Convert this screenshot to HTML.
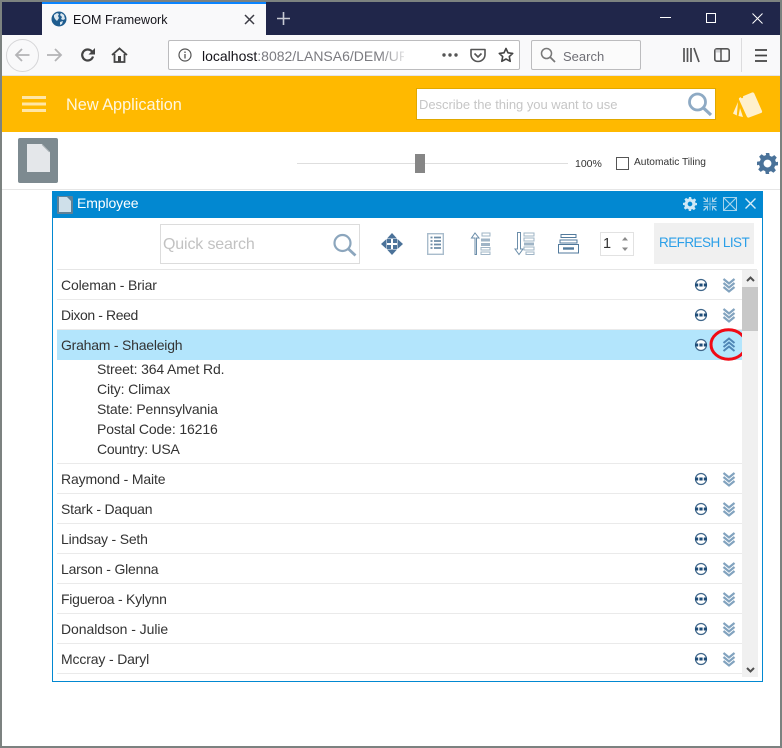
<!DOCTYPE html>
<html><head><meta charset="utf-8">
<style>
html,body{margin:0;padding:0;width:782px;height:748px;overflow:hidden;background:#fff}
body{position:relative;font-family:"Liberation Sans",sans-serif;color:#333}
.a{position:absolute}
.t{position:absolute;white-space:nowrap;line-height:20px}
.sep{position:absolute;left:57px;width:685px;height:1px;background:#eaeaea}
.n{position:absolute;left:61px;font-size:14px;line-height:20px;color:#333;white-space:nowrap;letter-spacing:-.15px}
.d{position:absolute;left:97px;font-size:14px;line-height:20px;color:#333;white-space:nowrap;letter-spacing:-.13px}
svg{position:absolute;overflow:visible}
</style></head><body>
<!-- window frame -->
<div class="a" style="left:0;top:0;width:782px;height:748px;box-sizing:border-box;border:2px solid #7c8280"></div>
<div class="a" style="left:2px;top:2px;width:778px;height:33px;background:#20264a"></div>
<div class="a" style="left:42px;top:2px;width:224px;height:33px;background:#f9f9fa"></div>
<div class="a" style="left:42px;top:2px;width:224px;height:2px;background:#0a84ff"></div>
<svg style="left:51px;top:11px" width="16" height="16" viewBox="0 0 16 16"><circle cx="8" cy="8" r="7.5" fill="#1f5d8f"/><path d="M3 4l3-2 2 1-1 2 1 2-2 3-2-2-1-2zM10 2l3 2 1 4-2 1-2-1 1-2-2-2zM9 11l3-1-1 3-2 1z" fill="#dbe7f0"/></svg>
<div class="t" style="left:73px;top:10px;font-size:12.5px;color:#15141a">EOM Framework</div>
<svg style="left:244px;top:14px" width="11" height="11" viewBox="0 0 11 11"><path d="M1 1l9 9M10 1l-9 9" stroke="#3c3c44" stroke-width="1.5"/></svg>
<svg style="left:276px;top:11px" width="15" height="15" viewBox="0 0 15 15"><path d="M7.5 1v13M1 7.5h13" stroke="#c8cad4" stroke-width="1.6"/></svg>
<svg style="left:660px;top:17px" width="11" height="2"><path d="M0 .5h11" stroke="#fff"/></svg>
<div class="a" style="left:706px;top:13px;width:8px;height:8px;border:1px solid #fff"></div>
<svg style="left:752px;top:13px" width="11" height="11" viewBox="0 0 11 11"><path d="M.5.5l10 10M10.5.5l-10 10" stroke="#fff"/></svg>

<!-- nav toolbar -->
<div class="a" style="left:2px;top:35px;width:778px;height:40px;background:#f9f9fa"></div>
<div class="a" style="left:2px;top:75px;width:778px;height:1px;background:#e4e4e6"></div>
<div class="a" style="left:6px;top:39px;width:31px;height:31px;border:1px solid #d6d6d8;border-radius:50%;background:#f9f9fa"></div>
<svg style="left:14px;top:47px" width="17" height="16" viewBox="0 0 17 16"><path d="M15.5 8H2M8 2L2 8l6 6" fill="none" stroke="#b4b4b6" stroke-width="1.8"/></svg>
<svg style="left:46px;top:47px" width="17" height="16" viewBox="0 0 17 16"><path d="M1 8h14M9 2l6 6-6 6" fill="none" stroke="#b4b4b6" stroke-width="1.8"/></svg>
<svg style="left:80px;top:47px" width="16" height="16" viewBox="0 0 16 16"><path d="M13 9.5A5.5 5.5 0 1 1 11.5 4L14 6" fill="none" stroke="#444" stroke-width="2.200"/><path d="M15 1v6.500h-6.500z" fill="#444"/></svg>
<svg style="left:111px;top:47px" width="17" height="16" viewBox="0 0 17 16"><path d="M1 8l7.500-6.500L16 8M3.500 7v8h10V7" fill="none" stroke="#444" stroke-width="1.800"/><rect x="7" y="9" width="3" height="6" fill="#444"/></svg>
<div class="a" style="left:168px;top:40px;width:352px;height:30px;box-sizing:border-box;border:1px solid #bcbcbe;border-radius:2px;background:#fff"></div>
<svg style="left:178px;top:48px" width="14" height="14" viewBox="0 0 14 14"><circle cx="7" cy="7" r="6" fill="none" stroke="#555" stroke-width="1.200"/><path d="M7 6v4.500M7 3.500v1.500" stroke="#555" stroke-width="1.300"/></svg>
<div class="t" style="left:202px;top:46px;font-size:14px;color:#15141a;width:202px;overflow:hidden">localhost<span style="color:#7b7b80">:8082/LANSA6/DEM/UF_</span></div>
<div class="a" style="left:380px;top:41px;width:30px;height:28px;background:linear-gradient(90deg,rgba(255,255,255,0),#fff)"></div>
<svg style="left:442px;top:53px" width="16" height="4"><circle cx="2" cy="2" r="1.700" fill="#555"/><circle cx="8" cy="2" r="1.700" fill="#555"/><circle cx="14" cy="2" r="1.700" fill="#555"/></svg>
<svg style="left:470px;top:48px" width="16" height="15" viewBox="0 0 16 15"><path d="M1 1.500h14v5a7 7 0 0 1-14 0z" fill="none" stroke="#555" stroke-width="1.600" stroke-linejoin="round"/><path d="M4.500 5.500L8 9l3.500-3.500" fill="none" stroke="#555" stroke-width="1.600"/></svg>
<svg style="left:498px;top:47px" width="16" height="16" viewBox="0 0 16 16"><path d="M8 1.500l2 4.300 4.700.6-3.400 3.200.9 4.700L8 12l-4.200 2.300.9-4.700L1.300 6.400 6 5.800z" fill="none" stroke="#444" stroke-width="1.600" stroke-linejoin="round"/></svg>
<div class="a" style="left:531px;top:40px;width:110px;height:30px;box-sizing:border-box;border:1px solid #bcbcbe;border-radius:2px;background:#fbfbfb"></div>
<svg style="left:540px;top:47px" width="16" height="16" viewBox="0 0 16 16"><circle cx="6.500" cy="6.500" r="5" fill="none" stroke="#777" stroke-width="1.500"/><path d="M10 10l5 5" stroke="#777" stroke-width="1.800"/></svg>
<div class="t" style="left:563px;top:47px;font-size:13px;color:#6f6f76">Search</div>
<svg style="left:683px;top:48px" width="17" height="15" viewBox="0 0 17 15"><path d="M1 0v14M4.500 0v14M8 0v14M11 0l5 14" fill="none" stroke="#555" stroke-width="1.700"/></svg>
<svg style="left:714px;top:48px" width="16" height="14" viewBox="0 0 16 14"><rect x=".8" y=".8" width="14.400" height="12.400" rx="2" fill="none" stroke="#555" stroke-width="1.600"/><rect x="1.500" y="1.500" width="5" height="3" fill="#d0d0d2"/><path d="M7 1v12" stroke="#555" stroke-width="1.500"/></svg>
<div class="a" style="left:741px;top:38px;width:1px;height:34px;background:#dcdcde"></div>
<svg style="left:755px;top:49px" width="12" height="13" viewBox="0 0 12 13"><path d="M0 1h12M0 6.500h12M0 12h12" stroke="#444" stroke-width="1.700"/></svg>

<!-- yellow app bar -->
<div class="a" style="left:2px;top:76px;width:778px;height:56px;background:#ffb900"></div>
<svg style="left:22px;top:96px" width="24" height="16" viewBox="0 0 24 16"><path d="M0 1.500h24M0 8h24M0 14.500h24" stroke="#ffe6a6" stroke-width="3"/></svg>
<div class="t" style="left:66px;top:94.500px;font-size:16.300px;color:#fff7e0">New Application</div>
<div class="a" style="left:416px;top:88px;width:300px;height:32px;box-sizing:border-box;border:1px solid #e0a800;background:#fff"></div>
<div class="t" style="left:419px;top:94.500px;font-size:13px;color:#c6c6c6;letter-spacing:-.03px">Describe the thing you want to use</div>
<svg style="left:687px;top:92px" width="26" height="25" viewBox="0 0 26 25"><circle cx="10.500" cy="10" r="8" fill="none" stroke="#8eaac4" stroke-width="2.800"/><path d="M16.500 16l7.500 7" stroke="#8eaac4" stroke-width="3.200"/></svg>
<svg style="left:0;top:0" width="782" height="130"><path d="M740 97.500L752 92.500Q753.500 92 754.300 93.500L762 111Q762.500 112.500 761 113L749 117.500Q747.500 118 746.800 116.500L739 99.500Q738.500 98 740 97.500z" fill="#fff0cc"/><path d="M738 102L733 113.500 736.800 115.500zM740 108L738.500 116 743 117z" fill="#fff0cc"/><circle cx="742" cy="97" r="1.200" fill="#ffb900"/></svg>

<!-- secondary toolbar -->
<div class="a" style="left:18px;top:138px;width:40px;height:45px;background:#7d8a90;border-radius:2px"></div>
<svg style="left:27px;top:144px" width="23" height="28" viewBox="0 0 23 28"><path d="M0 0h15l8 8v20H0z" fill="#e4e7ea"/><path d="M15 .5l7.500 7.500" stroke="#aab2b6"/></svg>
<div class="a" style="left:297px;top:163px;width:271px;height:1px;background:#dedede"></div>
<div class="a" style="left:415px;top:154px;width:10px;height:19px;background:#868686"></div>
<div class="t" style="left:575px;top:154px;font-size:10.500px;color:#333">100%</div>
<div class="a" style="left:616px;top:157px;width:11px;height:11px;border:1px solid #555;background:#fff"></div>
<div class="t" style="left:634px;top:153px;font-size:10.200px;color:#333">Automatic Tiling</div>
<svg style="left:757px;top:153px" width="21" height="21" viewBox="0 0 24 24"><path fill="#4a7299" fill-rule="evenodd" d="M10 0h4l.6 3.300 2.400 1 2.800-1.900 2.800 2.800-1.900 2.800 1 2.400L24 10v4l-3.300.6-1 2.400 1.900 2.800-2.800 2.800-2.800-1.900-2.400 1L14 24h-4l-.6-3.300-2.400-1-2.800 1.900-2.800-2.800 1.900-2.800-1-2.400L0 14v-4l3.300-.6 1-2.400-1.900-2.800 2.800-2.800 2.800 1.900 2.400-1zM12 7.500a4.500 4.500 0 1 0 0 9 4.500 4.500 0 0 0 0-9z"/></svg>
<div class="a" style="left:2px;top:189px;width:778px;height:1px;background:#e6e6e6"></div>

<!-- panel -->
<div class="a" style="left:52px;top:191px;width:711px;height:491px;box-sizing:border-box;border:1px solid #0288d1;background:#fff"></div>
<div class="a" style="left:52px;top:191px;width:711px;height:27px;background:#0288d1"></div>
<div class="a" style="left:57px;top:196px;width:16px;height:18px;background:#5f8197;border-radius:1px"></div>
<svg style="left:59px;top:197px" width="12" height="15" viewBox="0 0 12 15"><path d="M0 0h8l4 4v11H0z" fill="#cfe0ea"/></svg>
<div class="t" style="left:77px;top:193px;font-size:14px;color:#fff;letter-spacing:-.1px">Employee</div>
<svg style="left:683px;top:197px" width="14" height="14" viewBox="0 0 24 24"><path fill="#cfe8f6" fill-rule="evenodd" d="M10 0h4l.6 3.300 2.400 1 2.800-1.900 2.800 2.800-1.900 2.800 1 2.400L24 10v4l-3.300.6-1 2.400 1.900 2.800-2.800 2.800-2.800-1.900-2.400 1L14 24h-4l-.6-3.300-2.400-1-2.800 1.900-2.800-2.800 1.900-2.800-1-2.400L0 14v-4l3.300-.6 1-2.400-1.900-2.800 2.800-2.800 2.800 1.900 2.400-1zM12 8a4 4 0 1 0 0 8 4 4 0 0 0 0-8z"/></svg>
<svg style="left:703px;top:197px" width="14" height="14" viewBox="0 0 14 14" fill="none" stroke="#a5d3ec"><path d="M.5 .5l4.500 4.500M13.500 .5L9 5M.5 13.500L5 9M13.500 13.500L9 9" stroke-width="1.300"/><path d="M.5 4.500h4v-4M9.500.5v4h4M.5 9.500h4v4M9.500 13.500v-4h4"/><path d="M.5 7h13M7 .5v13" stroke-width=".7"/></svg>
<svg style="left:723px;top:197px" width="14" height="14" viewBox="0 0 14 14" fill="none" stroke="#a5d3ec"><path d="M.5 .5l13 13M13.500 .5l-13 13" stroke-width="1.200"/><path d="M.5 4.500v-4h4M9.500.5h4v4M.5 9.500v4h4M13.500 9.500v4h-4M.5 .5h13v13h-13z" /></svg>
<svg style="left:745px;top:198px" width="11" height="11" viewBox="0 0 11 11"><path d="M.5.500l10 10M10.500.500l-10 10" stroke="#d4ecf8" stroke-width="1.400"/></svg>

<!-- panel toolbar -->
<div class="a" style="left:160px;top:224px;width:200px;height:40px;box-sizing:border-box;border:1px solid #dcdcdc;background:#fff"></div>
<div class="t" style="left:163px;top:234.500px;font-size:16px;color:#c2c2c2;letter-spacing:-.15px">Quick search</div>
<svg style="left:332px;top:233px" width="25" height="24" viewBox="0 0 25 24"><circle cx="10.500" cy="10" r="8" fill="none" stroke="#8ca6bd" stroke-width="2.200"/><path d="M16.500 16l7 6.500" stroke="#8ca6bd" stroke-width="2.800"/></svg>
<svg style="left:381px;top:233px" width="22" height="22" viewBox="0 0 22 22" fill="#4b7299"><path d="M11 0l5 5.500H6zM11 22l-5-5.500h10zM0 11l5.500-5v10zM22 11l-5.500 5V6z"/><path d="M6 6h4v4H6zM12 6h4v4h-4zM6 12h4v4H6zM12 12h4v4h-4z"/></svg>
<svg style="left:427px;top:233px" width="17" height="22" viewBox="0 0 17 22"><rect x=".7" y=".7" width="15.600" height="20.600" fill="#fff" stroke="#a9bccc" stroke-width="1.400"/><path d="M3.500 4.500h2M7 4.500h7M3.500 8h2M7 8h7M3.500 11.500h2M7 11.500h7M3.500 15h2M7 15h7" stroke="#6d8ca6" stroke-width="1.800"/></svg>
<svg style="left:470px;top:232px" width="21" height="23" viewBox="0 0 21 23" fill="none"><path d="M5 22.500V6H1.500L5 1l4 5H6.500v16.500z" stroke="#6c8eaa"/><rect x="12" y="1" width="8" height="3" stroke="#9fb4c6"/><rect x="11" y="6.500" width="9" height="3" fill="#9fb4c6"/><rect x="11" y="11" width="9" height="3" fill="#9fb4c6"/><rect x="11" y="15.500" width="9" height="2.500" stroke="#9fb4c6"/><rect x="11" y="20" width="9" height="2.500" stroke="#9fb4c6"/></svg>
<svg style="left:514px;top:232px" width="21" height="23" viewBox="0 0 21 23" fill="none"><path d="M3.500 .5V17H1l4 5.500L9 17H6.500V.5z" stroke="#6c8eaa"/><rect x="10" y="1" width="10" height="3" stroke="#9fb4c6"/><rect x="10" y="6" width="10" height="3" stroke="#9fb4c6"/><rect x="10" y="10.500" width="10" height="3" fill="#9fb4c6"/><rect x="10" y="15" width="10" height="3" stroke="#9fb4c6"/><rect x="12" y="20" width="8" height="2.500" stroke="#9fb4c6"/></svg>
<svg style="left:558px;top:234px" width="21" height="20" viewBox="0 0 21 20" fill="none" stroke="#527a9c"><rect x="3" y=".5" width="15" height="3"/><rect x="2" y="6" width="17" height="3"/><rect x=".5" y="10.500" width="20" height="8.500"/><path d="M5 14.500h11" stroke-width="2.400"/></svg>
<div class="a" style="left:600px;top:232px;width:34px;height:24px;box-sizing:border-box;border:1px solid #e2e2e2;background:#fff"></div>
<div class="t" style="left:603px;top:234px;font-size:14.500px;color:#333">1</div>
<svg style="left:621px;top:237px" width="8" height="14" viewBox="0 0 8 14"><path d="M4 0l3 3.500H1zM4 14l3-3.500H1z" fill="#8a8a8a"/></svg>
<div class="a" style="left:654px;top:223px;width:100px;height:41px;background:#f0f0f0"></div>
<div class="t" style="left:659px;top:233px;font-size:13.500px;color:#2b9fe8;letter-spacing:-.55px">REFRESH LIST</div>
<div class="a" style="left:57px;top:269px;width:700px;height:1px;background:#e6e6e6"></div>

<!-- list -->
<div class="a" style="left:57px;top:330px;width:685px;height:30px;background:#b3e5fc"></div>
<div class="n" style="top:275px">Coleman - Briar</div>
<div class="sep" style="top:299px"></div>
<div class="n" style="top:305px;letter-spacing:-.4px">Dixon - Reed</div>
<div class="sep" style="top:329px"></div>
<div class="n" style="top:335px;letter-spacing:-.22px">Graham - Shaeleigh</div>
<div class="d" style="top:359px">Street: 364 Amet Rd.</div>
<div class="d" style="top:379px">City: Climax</div>
<div class="d" style="top:399px;letter-spacing:-.16px">State: Pennsylvania</div>
<div class="d" style="top:419px">Postal Code: 16216</div>
<div class="d" style="top:439px;letter-spacing:-.25px">Country: USA</div>
<div class="sep" style="top:463px"></div>
<div class="n" style="top:469px">Raymond - Maite</div>
<div class="sep" style="top:493px"></div>
<div class="n" style="top:499px;letter-spacing:-.2px">Stark - Daquan</div>
<div class="sep" style="top:523px"></div>
<div class="n" style="top:529px;letter-spacing:-.2px">Lindsay - Seth</div>
<div class="sep" style="top:553px"></div>
<div class="n" style="top:559px;letter-spacing:-.2px">Larson - Glenna</div>
<div class="sep" style="top:583px"></div>
<div class="n" style="top:589px;letter-spacing:-.24px">Figueroa - Kylynn</div>
<div class="sep" style="top:613px"></div>
<div class="n" style="top:619px;letter-spacing:-.06px">Donaldson - Julie</div>
<div class="sep" style="top:643px"></div>
<div class="n" style="top:649px">Mccray - Daryl</div>
<div class="sep" style="top:673px"></div>

<svg class="a" style="left:0;top:0" width="782" height="748">
<defs>
<g id="m"><circle cx="0" cy="0" r="5.500" fill="#fff" stroke="#3f668a" stroke-width="1.200"/><path d="M-6 -1.500h3.200v3h-3.200zM-1.600 -1.500h3.200v3h-3.200zM2.800 -1.500h3.200v3h-3.200z" fill="#1f4d78"/></g>
<g id="dn" fill="none" stroke="#82a3bf" stroke-width="2.200"><path d="M-5.500 -6L0 -1.500 5.500 -6"/><path d="M-5.500 -2L0 2.500 5.500 -2"/><path d="M-5.500 2L0 6.500 5.500 2"/></g>
<g id="up" fill="none" stroke="#4f86b5" stroke-width="2"><path d="M-5.500 6L0 1.500 5.500 6"/><path d="M-5.500 2L0 -2.500 5.500 2"/><path d="M-5.500 -2L0 -6.500 5.500 -2"/></g>
</defs>
<use href="#m" x="701" y="285"/><use href="#dn" x="729" y="285"/>
<use href="#m" x="701" y="315"/><use href="#dn" x="729" y="315"/>
<use href="#m" x="701" y="345"/><use href="#up" x="729" y="345"/>
<use href="#m" x="701" y="479"/><use href="#dn" x="729" y="479"/>
<use href="#m" x="701" y="509"/><use href="#dn" x="729" y="509"/>
<use href="#m" x="701" y="539"/><use href="#dn" x="729" y="539"/>
<use href="#m" x="701" y="569"/><use href="#dn" x="729" y="569"/>
<use href="#m" x="701" y="599"/><use href="#dn" x="729" y="599"/>
<use href="#m" x="701" y="629"/><use href="#dn" x="729" y="629"/>
<use href="#m" x="701" y="659"/><use href="#dn" x="729" y="659"/>
<ellipse cx="728.500" cy="344.500" rx="17.500" ry="14.700" fill="none" stroke="#f00a16" stroke-width="3"/>
</svg>

<!-- scrollbar -->
<div class="a" style="left:742px;top:270px;width:16px;height:407px;background:#f0f0f0"></div>
<div class="a" style="left:742px;top:287px;width:16px;height:44px;background:#c8c8c8"></div>
<svg style="left:746px;top:276px" width="9" height="6" viewBox="0 0 9 6"><path d="M1 5l3.500-3.500L8 5" fill="none" stroke="#505050" stroke-width="2"/></svg>
<svg style="left:746px;top:667px" width="9" height="6" viewBox="0 0 9 6"><path d="M1 1l3.500 3.500L8 1" fill="none" stroke="#505050" stroke-width="2"/></svg>
</body></html>
